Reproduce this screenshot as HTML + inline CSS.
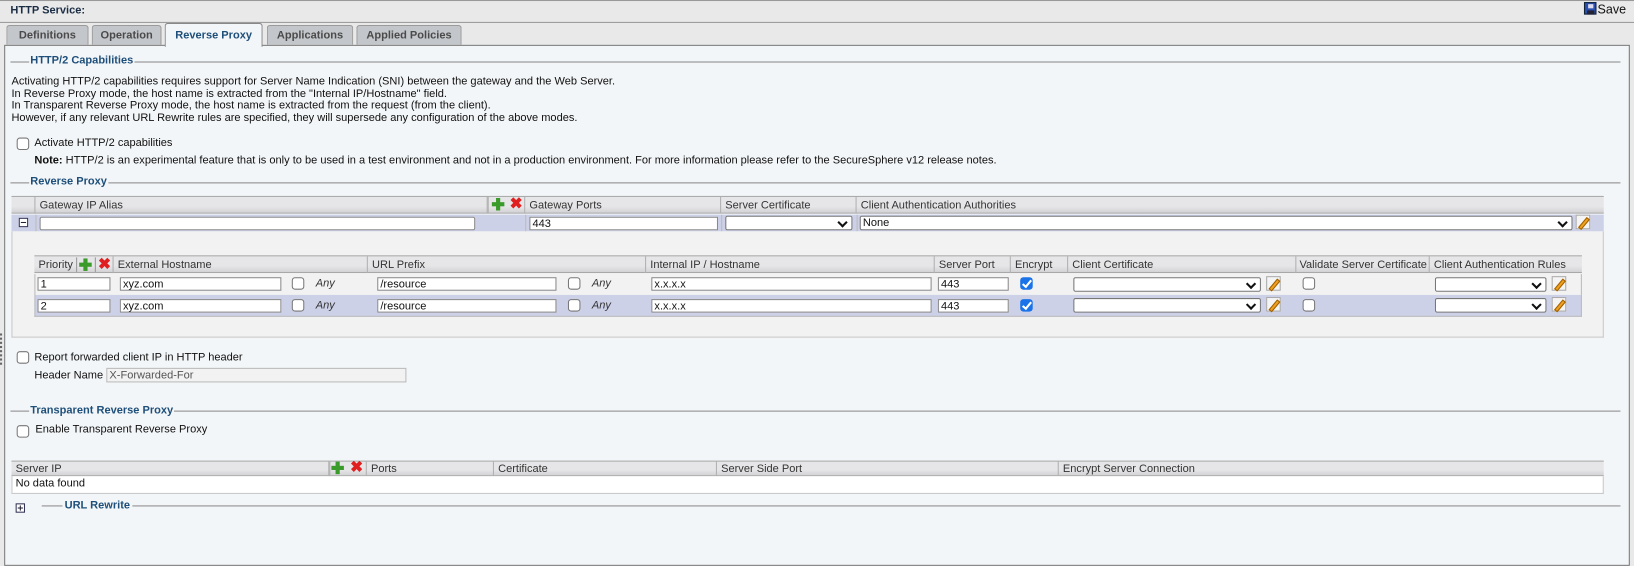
<!DOCTYPE html>
<html><head><meta charset="utf-8">
<style>
*{box-sizing:border-box;margin:0;padding:0}
html,body{width:1634px;height:546px;overflow:hidden;background:#e9e9e9}
#w{position:absolute;left:0;top:0;width:1568px;height:524px;transform:scale(1.04209);transform-origin:0 0;font-family:"Liberation Sans",Arial,sans-serif;font-size:10.6px;color:#111}
#w div{white-space:nowrap}
.a{position:absolute;white-space:nowrap}
.leg{position:absolute;height:1px;background:#8a8a8a}
.lt{position:absolute;font-weight:bold;color:#1e4f7a;background:#f3f6f8;padding:0 1px;line-height:12px;font-size:10.6px}
.hd{position:absolute;height:17px;background:linear-gradient(#e6e6e8 0,#e6e6e8 60%,#d3d3d6 100%);border-bottom:1px solid #a8a8a8;border-top:1px solid #a8a8a8}
.hc{position:absolute;top:0;height:16px;border-right:1px solid #b0b0b0;padding-left:4px;line-height:16px;color:#333;overflow:hidden}
.cb{position:absolute;width:12px;height:12px;border:1px solid #777;border-radius:3px;background:#fff}
.cbc{position:absolute;width:12px;height:12px;border-radius:3px;background:#1a73e8}
.cbc:after{content:"";position:absolute;left:4px;top:1px;width:3px;height:7px;border:solid #fff;border-width:0 2px 2px 0;transform:rotate(40deg)}
.in{position:absolute;height:13px;background:#fff;border:1px solid #8a8a8a;padding-left:2px;line-height:12px}
.sel{position:absolute;height:14px;background:#fff;border:1px solid #777;border-radius:2px}
.sel:after{content:"";position:absolute;right:5px;top:2px;width:5px;height:5px;border:solid #111;border-width:0 2px 2px 0;transform:rotate(45deg)}
.pen{position:absolute;width:14px;height:14px;border:1px solid #aaa;background:#f4f4f4}
.pen:after{content:"";position:absolute;left:5px;top:1px;width:2px;height:11px;background:#f0a020;border:1px solid #a06000;transform:rotate(40deg)}
.plus{position:absolute;width:12px;height:12px}
.plus:before{content:"";position:absolute;left:4px;top:0;width:4px;height:12px;background:#3a9a2a}
.plus:after{content:"";position:absolute;left:0;top:4px;width:12px;height:4px;background:#3a9a2a}
.x{position:absolute;width:12px;height:12px;color:#e02020;font-weight:bold;font-size:15px;line-height:12px;text-align:center}
.ital{font-style:italic;color:#333}
</style></head><body><div id="w">
<div class="a" style="left:0;top:0;width:1568px;height:1px;background:#999"></div>
<div class="a" style="left:10px;top:4px;font-weight:bold;color:#1b2d44">HTTP Service:</div>
<div class="a" style="left:0;top:21px;width:1568px;height:1px;background:#999"></div>
<div class="a" style="left:1520px;top:2px;width:12px;height:12px;background:#2a4fb0;border:1px solid #123"><div style="position:absolute;left:3px;top:1px;width:5px;height:4px;background:#dde"></div><div style="position:absolute;left:2px;top:7px;width:7px;height:4px;background:#223"></div></div>
<div class="a" style="left:1533px;top:2px;font-size:12px">Save</div>
<div class="a" style="left:6px;top:24px;width:79px;height:19px;background:#c3c6ca;border:1px solid #9a9a9a;border-bottom:none;border-radius:3px 3px 0 0;font-weight:bold;color:#4a4a4a;text-align:center;line-height:18px">Definitions</div>
<div class="a" style="left:88px;top:24px;width:67px;height:19px;background:#c3c6ca;border:1px solid #9a9a9a;border-bottom:none;border-radius:3px 3px 0 0;font-weight:bold;color:#4a4a4a;text-align:center;line-height:18px">Operation</div>
<div class="a" style="left:342px;top:24px;width:101px;height:19px;background:#c3c6ca;border:1px solid #9a9a9a;border-bottom:none;border-radius:3px 3px 0 0;font-weight:bold;color:#4a4a4a;text-align:center;line-height:18px">Applied Policies</div>
<div class="a" style="left:256px;top:24px;width:83px;height:19px;background:#c3c6ca;border:1px solid #9a9a9a;border-bottom:none;border-radius:3px 3px 0 0;font-weight:bold;color:#4a4a4a;text-align:center;line-height:18px">Applications</div>
<div class="a" style="left:4px;top:43px;width:1560px;height:500px;background:#f3f6f8;border:1px solid #777"></div>
<div class="a" style="left:158px;top:22px;width:94px;height:23px;background:#f3f6f8;border:1px solid #888;border-bottom:none;border-radius:3px 3px 0 0;font-weight:bold;color:#1e4f7a;text-align:center;line-height:22px">Reverse Proxy</div>

<div class="leg" style="left:10px;top:59px;width:1545px"></div><div class="lt" style="left:28px;top:52px">HTTP/2 Capabilities</div>
<div class="a" style="left:11px;top:73px;line-height:11.6px;white-space:normal">Activating HTTP/2 capabilities requires support for Server Name Indication (SNI) between the gateway and the Web Server.<br>In Reverse Proxy mode, the host name is extracted from the "Internal IP/Hostname" field.<br>In Transparent Reverse Proxy mode, the host name is extracted from the request (from the client).<br>However, if any relevant URL Rewrite rules are specified, they will supersede any configuration of the above modes.</div>
<div class="cb" style="left:16px;top:132px"></div><div class="a" style="left:33px;top:131px">Activate HTTP/2 capabilities</div>
<div class="a" style="left:33px;top:148px"><b>Note:</b> HTTP/2 is an experimental feature that is only to be used in a test environment and not in a production environment. For more information please refer to the SecureSphere v12 release notes.</div>

<div class="leg" style="left:10px;top:175px;width:1545px"></div><div class="lt" style="left:28px;top:168px">Reverse Proxy</div>
<div class="hd" style="left:11px;top:188px;width:1528px">
<div class="hc" style="left:0;width:23px"></div>
<div class="hc" style="left:23px;width:434px">Gateway IP Alias</div>
<div class="hc" style="left:457px;width:36px;border-left:1px solid #b0b0b0"></div>
<div class="hc" style="left:493px;width:188px">Gateway Ports</div>
<div class="hc" style="left:681px;width:130px">Server Certificate</div>
<div class="hc" style="left:811px;width:717px;border-right:none">Client Authentication Authorities</div>
</div>
<div class="plus" style="left:472px;top:190px"></div><div class="x" style="left:489px;top:190px">✖</div>
<div class="a" style="left:11px;top:206px;width:1528px;height:16px;background:#cdd1e8"></div>
<div class="a" style="left:34px;top:206px;width:1px;height:16px;background:#bbb"></div>
<div class="a" style="left:504px;top:206px;width:1px;height:16px;background:#bbb"></div>
<div class="a" style="left:692px;top:206px;width:1px;height:16px;background:#bbb"></div>
<div class="a" style="left:822px;top:206px;width:1px;height:16px;background:#bbb"></div>
<div class="a" style="left:18px;top:209px;width:9px;height:9px;border:1px solid #335;background:#fff"><div style="position:absolute;left:1px;top:3px;width:5px;height:1px;background:#223"></div></div>
<div class="in" style="left:38px;top:208px;width:418px;border-radius:2px"></div>
<div class="in" style="left:508px;top:208px;width:181px">443</div>
<div class="sel" style="left:696px;top:207px;width:122px"></div>
<div class="sel" style="left:825px;top:207px;width:684px"><span style="position:absolute;left:2px;top:0;line-height:12px">None</span></div>
<div class="pen" style="left:1512px;top:206px"></div>
<div class="a" style="left:11px;top:222px;width:1528px;height:102px;background:#f2f2f2;border:1px solid #c8c8c8;border-top:none"></div>
<div class="hd" style="left:33px;top:245px;width:1485px">
<div class="hc" style="left:0;width:76px">Priority</div>
<div class="hc" style="left:76px;width:244px">External Hostname</div>
<div class="hc" style="left:320px;width:267px">URL Prefix</div>
<div class="hc" style="left:587px;width:277px">Internal IP / Hostname</div>
<div class="hc" style="left:864px;width:73px">Server Port</div>
<div class="hc" style="left:937px;width:55px">Encrypt</div>
<div class="hc" style="left:992px;width:219px">Client Certificate</div>
<div class="hc" style="left:1211px;width:128px;padding-left:3px">Validate Server Certificate</div>
<div class="hc" style="left:1339px;width:146px;border-right:none">Client Authentication Rules</div>
</div>
<div class="a" style="left:73px;top:247px;width:1px;height:14px;background:#999"></div>
<div class="a" style="left:91px;top:247px;width:1px;height:14px;background:#999"></div>
<div class="plus" style="left:76px;top:248px"></div><div class="x" style="left:94px;top:248px">✖</div>
<div class="a" style="left:33px;top:263px;width:1485px;height:20px;background:#f2f2f2;border-left:1px solid #bbb;border-right:1px solid #bbb"></div>
<div class="a" style="left:33px;top:283px;width:1485px;height:21px;background:#cdd1e8;border:1px solid #bbb;border-top:none"></div>

<div class="in" style="left:36px;top:266px;width:70px">1</div>
<div class="in" style="left:115px;top:266px;width:155px">xyz.com</div>
<div class="cb" style="left:280px;top:266px"></div><div class="a ital" style="left:303px;top:266px">Any</div>
<div class="in" style="left:362px;top:266px;width:172px">/resource</div>
<div class="cb" style="left:545px;top:266px"></div><div class="a ital" style="left:568px;top:266px">Any</div>
<div class="in" style="left:625px;top:266px;width:269px">x.x.x.x</div>
<div class="in" style="left:900px;top:266px;width:68px">443</div>
<div class="cbc" style="left:979px;top:266px"></div>
<div class="sel" style="left:1030px;top:266px;width:180px"></div><div class="pen" style="left:1215px;top:265px"></div>
<div class="cb" style="left:1250px;top:266px"></div>
<div class="sel" style="left:1377px;top:266px;width:107px"></div><div class="pen" style="left:1489px;top:265px"></div>

<div class="in" style="left:36px;top:287px;width:70px">2</div>
<div class="in" style="left:115px;top:287px;width:155px">xyz.com</div>
<div class="cb" style="left:280px;top:287px"></div><div class="a ital" style="left:303px;top:287px">Any</div>
<div class="in" style="left:362px;top:287px;width:172px">/resource</div>
<div class="cb" style="left:545px;top:287px"></div><div class="a ital" style="left:568px;top:287px">Any</div>
<div class="in" style="left:625px;top:287px;width:269px">x.x.x.x</div>
<div class="in" style="left:900px;top:287px;width:68px">443</div>
<div class="cbc" style="left:979px;top:287px"></div>
<div class="sel" style="left:1030px;top:286px;width:180px"></div><div class="pen" style="left:1215px;top:285px"></div>
<div class="cb" style="left:1250px;top:287px"></div>
<div class="sel" style="left:1377px;top:286px;width:107px"></div><div class="pen" style="left:1489px;top:285px"></div>

<div class="cb" style="left:16px;top:337px"></div><div class="a" style="left:33px;top:337px">Report forwarded client IP in HTTP header</div>
<div class="a" style="left:33px;top:354px">Header Name</div>
<div class="in" style="left:102px;top:353px;width:288px;height:14px;background:#f2f2f2;border-color:#bbb;color:#555">X-Forwarded-For</div>

<div class="leg" style="left:10px;top:394px;width:1545px"></div><div class="lt" style="left:28px;top:388px">Transparent Reverse Proxy</div>
<div class="cb" style="left:16px;top:408px"></div><div class="a" style="left:34px;top:406px">Enable Transparent Reverse Proxy</div>
<div class="hd" style="left:11px;top:442px;width:1528px;height:15px">
<div class="hc" style="left:0;width:305px;height:14px;line-height:14px">Server IP</div>
<div class="hc" style="left:305px;width:36px;height:14px;border-left:1px solid #b0b0b0"></div>
<div class="hc" style="left:341px;width:122px;height:14px;line-height:14px">Ports</div>
<div class="hc" style="left:463px;width:214px;height:14px;line-height:14px">Certificate</div>
<div class="hc" style="left:677px;width:328px;height:14px;line-height:14px">Server Side Port</div>
<div class="hc" style="left:1005px;width:523px;height:14px;line-height:14px;border-right:none">Encrypt Server Connection</div>
</div>
<div class="plus" style="left:318px;top:443px"></div><div class="x" style="left:336px;top:443px">✖</div>
<div class="a" style="left:11px;top:457px;width:1528px;height:17px;background:#fff;border:1px solid #c8c8c8;border-top:none;padding-left:3px;line-height:14px">No data found</div>

<div class="a" style="left:15px;top:483px;width:9px;height:9px;border:1px solid #335;background:#fff"><div style="position:absolute;left:1px;top:3px;width:5px;height:1px;background:#223"></div><div style="position:absolute;left:3px;top:1px;width:1px;height:5px;background:#223"></div></div>
<div class="leg" style="left:40px;top:485px;width:1515px"></div><div class="lt" style="left:60px;top:479px;padding:0 2px">URL Rewrite</div>
<div class="a" style="left:0;top:320px;width:2px;height:30px;border-left:2px dotted #666"></div>
</div></body></html>
